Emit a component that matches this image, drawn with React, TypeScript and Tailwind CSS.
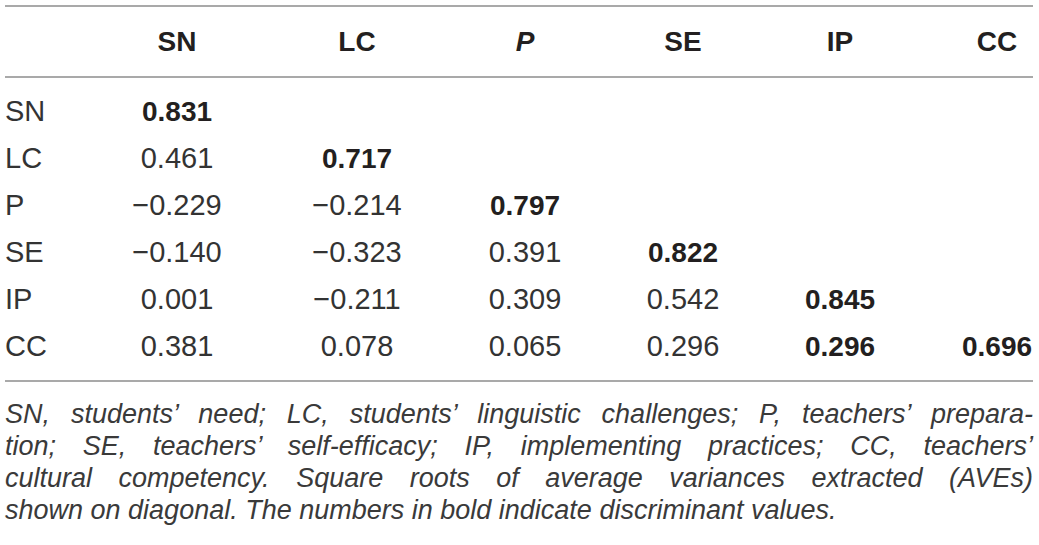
const columns = ['SN', 'LC', 'P', 'SE', 'IP', 'CC']

// null = empty cell, [value, bold]
const rows: { label: string; cells: ([string, boolean] | null)[] }[] = [
  { label: 'SN', cells: [['0.831', true], null, null, null, null, null] },
  { label: 'LC', cells: [['0.461', false], ['0.717', true], null, null, null, null] },
  { label: 'P', cells: [['\u22120.229', false], ['\u22120.214', false], ['0.797', true], null, null, null] },
  { label: 'SE', cells: [['\u22120.140', false], ['\u22120.323', false], ['0.391', false], ['0.822', true], null, null] },
  { label: 'IP', cells: [['0.001', false], ['\u22120.211', false], ['0.309', false], ['0.542', false], ['0.845', true], null] },
  { label: 'CC', cells: [['0.381', false], ['0.078', false], ['0.065', false], ['0.296', false], ['0.296', true], ['0.696', true]] },
]

// widths picked so each column's centre sits where the figure has it
const colClass = [
  'w-[144px]',
  'w-[216px]',
  'w-[120px]',
  'w-[196px]',
  'w-[118px]',
  'w-[134px] pl-[62px]',
]

const captionLines = [
  'SN, students\u2019 need; LC, students\u2019 linguistic challenges; P, teachers\u2019 prepara-',
  'tion; SE, teachers\u2019 self-efficacy; IP, implementing practices; CC, teachers\u2019',
  'cultural competency. Square roots of average variances extracted (AVEs)',
]

export default function App() {
  return (
    <div
      className="w-[1039px] h-[545px] bg-white pt-[5px] pl-[5px] pr-[6px] text-[#231f20] overflow-hidden"
      style={{ fontFamily: '"Liberation Sans", Arial, sans-serif' }}
    >
      {/* header */}
      <div className="flex items-center h-[73px] border-y-2 border-[#a9a9a9] text-[28px] font-bold">
        <div className="w-[100px]" />
        {columns.map((c, i) => (
          <div key={c} className={`${colClass[i]} text-center ${c === 'P' ? 'italic' : ''}`}>
            {c}
          </div>
        ))}
      </div>

      {/* body */}
      <div className="py-[10px] border-b-2 border-[#a9a9a9] text-[29px]">
        {rows.map((r) => (
          <div key={r.label} className="flex items-center h-[47px]">
            <div className="w-[100px] text-[#333]">{r.label}</div>
            {r.cells.map((cell, i) => (
              <div
                key={i}
                className={`${colClass[i]} text-center ${cell && cell[1] ? 'font-bold text-[28px]' : 'text-[#333]'}`}
              >
                {cell ? cell[0] : ''}
              </div>
            ))}
          </div>
        ))}
      </div>

      {/* footnote */}
      <div className="pt-[16px] text-[27px] leading-[32px] italic text-[#3a3a3a]">
        {captionLines.map((line) => (
          <div key={line} className="text-justify [text-align-last:justify] whitespace-nowrap">
            {line}
          </div>
        ))}
        <div>shown on diagonal. The numbers in bold indicate discriminant values.</div>
      </div>
    </div>
  )
}
